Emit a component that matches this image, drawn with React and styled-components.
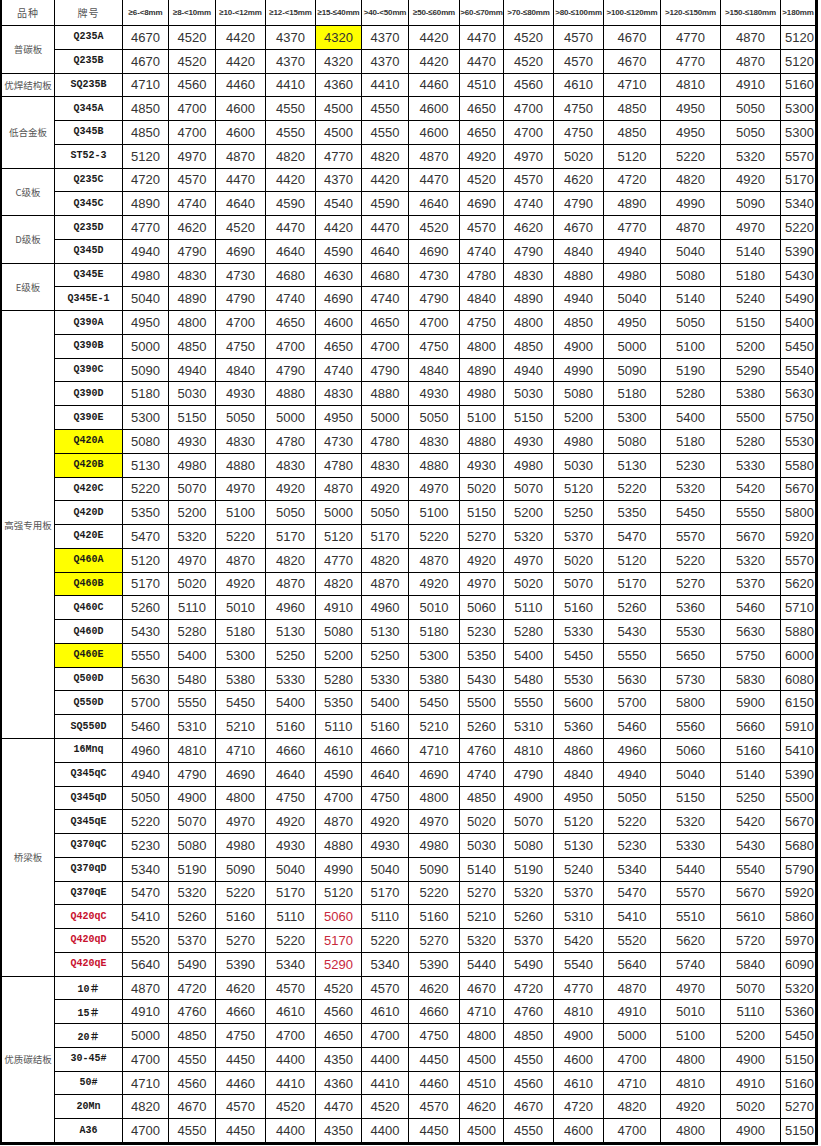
import React from "react";
import styled, { createGlobalStyle } from "styled-components";

const Global = createGlobalStyle`
  html, body { margin: 0; padding: 0; background: #ffffff; }
  body { font-family: "Liberation Sans", Arial, sans-serif; }
`;

const COLS = [53, 68, 46, 47, 50, 50, 46, 47, 51, 44, 50, 50, 57, 60, 60, 35];
const ROW_COUNT = 47;

const Sheet = styled.div`
  display: grid;
  width: max-content;
  grid-template-columns: ${COLS.map((w) => `${w}px`).join(" ")};
  grid-template-rows: 26px repeat(${ROW_COUNT}, 23.77px);
  border-left: 2px solid #000;
  border-right: 2px solid #000;
  border-bottom: 2px solid #000;
  background: #fff;
`;

const Cell = styled.div`
  box-sizing: border-box;
  border-right: 1px solid #000;
  border-bottom: 1px solid #000;
  display: flex;
  align-items: center;
  justify-content: center;
  overflow: hidden;
  white-space: nowrap;
  background: ${(p) => (p.$hl ? "#ffff00" : "#ffffff")};
`;

const HeadCell = styled(Cell)`
  font-family: ${(p) =>
    p.$cjk ? '"Noto Sans CJK SC", sans-serif' : '"Liberation Sans", Arial, sans-serif'};
  font-size: ${(p) => (p.$cjk ? "10px" : "8px")};
  font-weight: ${(p) => (p.$cjk ? 400 : 700)};
  color: ${(p) => (p.$cjk ? "#555" : "#333")};
  letter-spacing: ${(p) => (p.$cjk ? "1px" : "-0.15px")};
  justify-content: center;
`;

const CategoryCell = styled(Cell)`
  grid-row: span ${(p) => p.$span};
  font-family: "Noto Sans CJK SC", sans-serif;
  font-size: 9.5px;
  color: #555;
`;

const GradeCell = styled(Cell)`
  font-family: "Liberation Mono", "Noto Sans CJK SC", monospace;
  font-weight: 700;
  font-size: 10px;
  color: ${(p) => (p.$red ? "#c8102e" : "#1a1a1a")};
  padding-bottom: 1px;
`;

const NumCell = styled(Cell)`
  font-family: "Liberation Sans", Arial, sans-serif;
  font-size: 13px;
  color: ${(p) => (p.$red ? "#c8283c" : "#333")};
  justify-content: ${(p) => (p.$last ? "flex-end" : "center")};
  padding-right: ${(p) => (p.$last ? "1px" : "0")};
`;

const HEADERS = [
  "≥6-<8mm",
  "≥8-<10mm",
  "≥10-<12mm",
  "≥12-<15mm",
  "≥15-≤40mm",
  ">40-<50mm",
  "≥50-≤60mm",
  ">60-≤70mm",
  ">70-≤80mm",
  ">80-≤100mm",
  ">100-≤120mm",
  ">120-≤150mm",
  ">150-≤180mm",
  ">180mm",
];

const OFFSETS = [0, -150, -250, -300, -350, -300, -250, -200, -150, -100, 0, 100, 200, 450];

const GROUPS = [
  { name: "普碳板", rows: [["Q235A", 4670, { hlCol: 4 }], ["Q235B", 4670]] },
  { name: "优焊结构板", rows: [["SQ235B", 4710]] },
  { name: "低合金板", rows: [["Q345A", 4850], ["Q345B", 4850], ["ST52-3", 5120]] },
  { name: "C级板", rows: [["Q235C", 4720], ["Q345C", 4890]] },
  { name: "D级板", rows: [["Q235D", 4770], ["Q345D", 4940]] },
  { name: "E级板", rows: [["Q345E", 4980], ["Q345E-1", 5040]] },
  {
    name: "高强专用板",
    rows: [
      ["Q390A", 4950],
      ["Q390B", 5000],
      ["Q390C", 5090],
      ["Q390D", 5180],
      ["Q390E", 5300],
      ["Q420A", 5080, { hlGrade: true }],
      ["Q420B", 5130, { hlGrade: true }],
      ["Q420C", 5220],
      ["Q420D", 5350],
      ["Q420E", 5470],
      ["Q460A", 5120, { hlGrade: true }],
      ["Q460B", 5170, { hlGrade: true }],
      ["Q460C", 5260],
      ["Q460D", 5430],
      ["Q460E", 5550, { hlGrade: true }],
      ["Q500D", 5630],
      ["Q550D", 5700],
      ["SQ550D", 5460],
    ],
  },
  {
    name: "桥梁板",
    rows: [
      ["16Mnq", 4960],
      ["Q345qC", 4940],
      ["Q345qD", 5050],
      ["Q345qE", 5220],
      ["Q370qC", 5230],
      ["Q370qD", 5340],
      ["Q370qE", 5470],
      ["Q420qC", 5410, { red: true }],
      ["Q420qD", 5520, { red: true }],
      ["Q420qE", 5640, { red: true }],
    ],
  },
  {
    name: "优质碳结板",
    rows: [
      ["10＃", 4870],
      ["15＃", 4910],
      ["20＃", 5000],
      ["30-45#", 4700],
      ["50#", 4710],
      ["20Mn", 4820],
      ["A36", 4700],
    ],
  },
];

export default function App() {
  return (
    <>
      <Global />
      <Sheet>
        <HeadCell $cjk>品种</HeadCell>
        <HeadCell $cjk>牌号</HeadCell>
        {HEADERS.map((h) => (
          <HeadCell key={h}>{h}</HeadCell>
        ))}
        {GROUPS.map((g) =>
          g.rows.map(([grade, base, opts = {}], ri) => (
            <React.Fragment key={grade}>
              {ri === 0 && <CategoryCell $span={g.rows.length}>{g.name}</CategoryCell>}
              <GradeCell $hl={opts.hlGrade} $red={opts.red}>
                {grade}
              </GradeCell>
              {OFFSETS.map((o, ci) => (
                <NumCell
                  key={ci}
                  $hl={opts.hlCol === ci}
                  $red={opts.red && ci === 4}
                  $last={ci === OFFSETS.length - 1}
                >
                  {base + o}
                </NumCell>
              ))}
            </React.Fragment>
          ))
        )}
      </Sheet>
    </>
  );
}
